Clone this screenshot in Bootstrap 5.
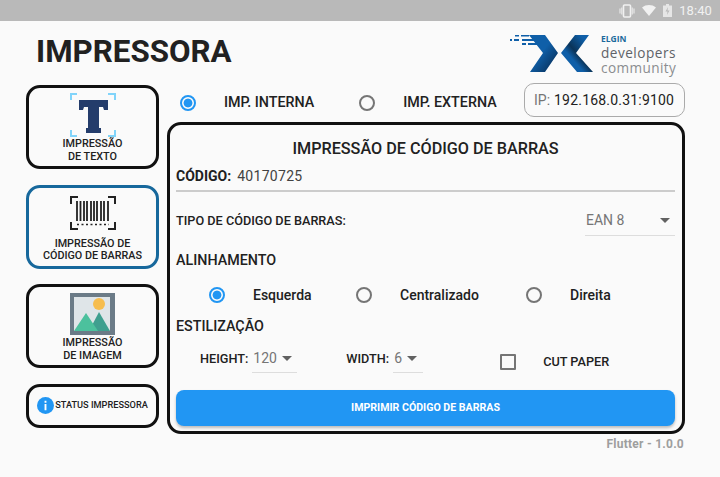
<!DOCTYPE html>
<html lang="pt-BR">

<head>
    <meta charset="UTF-8">
    <meta name="viewport" content="width=device-width, initial-scale=1.0">
    <title>Impressora</title>
    <link href="https://cdn.jsdelivr.net/npm/bootstrap@5.3.3/dist/css/bootstrap.min.css" rel="stylesheet">
    <style>
        html, body { height: 477px; overflow: hidden; }
        body { background: #fafafa; font-family: Roboto, sans-serif; color: #212121; }

        .status-bar { height: 21px; background: #b9b9b9; color: #f1f1f1; font-size: 13px; padding-right: 8px; gap: 7px; letter-spacing: .1px; }
        .top-head { height: 62px; padding: 0 33px 0 36px; }
        .page-title { font-size: 31.3px; font-weight: 700; line-height: 1; margin: 15px 0 0; }
        .logo-box { width: 177px; height: 46px; margin-top: 11px; }
        .logo-text { margin-left: 91px; padding-top: 2px; }
        .logo-elgin { color: #1b6a9c; font: 700 8.5px/10px "Open Sans", sans-serif; }
        .logo-dev { color: #5f6368; font: 500 13.6px/15px "Open Sans", sans-serif; letter-spacing: .5px; margin-top: 1px; }
        .logo-com { color: #8a8d90; font: 400 13.6px/15px "Open Sans", sans-serif; letter-spacing: .4px; }

        .page-body { padding-left: 26px; gap: 8px; }
        .side-col { width: 133px; padding-top: 2px; gap: 15.5px; }
        .side-btn { background: #fafafa; border: 3px solid #111; border-radius: 14px; height: 84px; font-size: 10.8px; font-weight: 500; line-height: 12.5px; color: #212121; text-transform: uppercase; }
        .side-btn.is-on { border-color: #17689c; }
        .side-btn svg { display: block; flex: none; }
        .side-status { height: 44px; font-size: 9.2px; gap: 1px; }

        .main-col { width: 518px; }
        .radio-row { height: 39px; padding-left: 13px; }
        .radio-md.form-check-input { width: 16px; height: 16px; margin: 0; flex: none; border: 2px solid #757575; background: transparent none; box-shadow: none; }
        .radio-md.form-check-input:checked[type=radio] { border-color: #2196f3; background: radial-gradient(circle, #2196f3 0 4px, transparent 4.8px); }
        .radio-lbl { font-size: 14.3px; font-weight: 500; color: #212121; margin-left: 28px; }
        .ip-box { width: 161px; height: 34px; border: 1px solid #aaa; border-radius: 10px; font-size: 14px; padding-left: 9px; color: #757575; }
        .ip-box b { font-weight: 400; color: #212121; letter-spacing: .2px; }

        .print-panel { height: 312px; border: 3px solid #111; border-radius: 14px; padding: 0 7px 0 6px; }
        .panel-title { font-size: 16.2px; font-weight: 500; height: 20px; margin: 14px 0 0; line-height: 20px; }
        .code-row { height: 27px; margin-top: 6px; border-bottom: 2px solid #ccc; font-size: 14px; padding-bottom: 2px; }
        .code-row label { font-weight: 700; margin-right: 6px; }
        .code-row .form-control { border: 0; padding: 0; background: none; box-shadow: none; font-size: 14px; letter-spacing: .3px; color: #424242; border-radius: 0; }
        .type-row { height: 30px; margin-top: 14px; }
        .type-lbl { font-size: 12.7px; font-weight: 500; }
        .pick { border-bottom: 1px solid #ddd; color: #757575; font-size: 14px; height: 100%; }
        .pick-ean { width: 90px; padding: 0 5px 0 1px; }
        .pick-h { width: 45px; padding: 0 5px 0 1px; height: 28px; }
        .pick-w { width: 30px; padding: 0 6px 0 1px; height: 28px; }
        .caret-dn { width: 0; height: 0; border: 5px solid transparent; border-top-color: #616161; border-bottom: 0; }
        .sec-title { font-size: 14.3px; font-weight: 500; line-height: 18px; }
        .align-row { height: 24px; margin-top: 14px; padding-left: 33px; font-weight: 500; }
        .opt-a { width: 147px; }
        .opt-b { width: 170px; }
        .opt-txt { font-size: 14px; margin-left: 28px; color: #212121; }
        .style-row { height: 28px; margin-top: 10px; padding-left: 24px; }
        .small-lbl { font-size: 12.7px; font-weight: 500; margin-right: 4px; }
        .cut-box.form-check-input { width: 16px; height: 16px; border: 2px solid #757575; margin: 5px 27px 0 77px; border-radius: 1px; background: transparent; box-shadow: none; }
        .cut-lbl { margin-top: 5px; }
        .print-btn { height: 36px; margin-top: 17px; background: #2196f3; border: 0; border-radius: 8px; color: #fff; font-size: 10.6px; font-weight: 700; box-shadow: 0 2px 3px rgba(0,0,0,.25); }
        .print-btn:hover { background: #2196f3; color: #fff; }
        .version { font-size: 12px; font-weight: 700; color: #9e9e9e; text-align: right; padding-right: 1px; margin-top: 1px; letter-spacing: .25px; }
    </style>
</head>

<body>
    <div class="status-bar d-flex align-items-center justify-content-end">
        <svg width="16" height="14" viewBox="0 0 16 14"><rect x="4.500" y="1" width="7" height="12" rx="1" fill="none" stroke="#f1f1f1" stroke-width="1.600"/><path d="M1 4.500v5M2.800 3.500v7M13.200 3.500v7M15 4.500v5" stroke="#f1f1f1"/></svg>
        <svg width="14" height="11" viewBox="0 0 14 11"><path d="M0 2.500C4-.8 10-.8 14 2.500L7 11z" fill="#f1f1f1"/></svg>
        <svg width="9" height="13" viewBox="0 0 9 13"><path d="M3 0h3v1.500h3V13H0V1.500h3z" fill="#e6e6e6"/><path d="M5 3L2.500 7.500h2L4 11l2.500-4.500h-2z" fill="#b9b9b9"/></svg>
        <span>18:40</span>
    </div>

    <div class="top-head d-flex justify-content-between align-items-start">
        <h1 class="page-title">IMPRESSORA</h1>
        <div class="logo-box d-flex position-relative">
            <svg class="position-absolute top-0 start-0" width="90" height="44" viewBox="0 0 90 44">
                <defs>
                    <linearGradient id="chevL" x1="0" y1="0" x2="1" y2="1"><stop offset=".45" stop-color="#0f5fa8"/><stop offset=".75" stop-color="#0a3f73"/><stop offset="1" stop-color="#0f5fa8"/></linearGradient>
                    <linearGradient id="chevR" x1="1" y1="0" x2="0" y2="1"><stop offset=".2" stop-color="#0f5fa8"/><stop offset=".5" stop-color="#0a3358"/><stop offset=".65" stop-color="#0f5fa8"/></linearGradient>
                </defs>
                <path d="M19 3H35L48 21 35 40H20L33 21Z" fill="url(#chevL)"/>
                <path d="M79 3H65L51 21 67 40H83L66 21Z" fill="url(#chevR)"/>
                <path d="M5 3h4v1.500H5zM11 3h8v1.500h-8zM0 7h2v2H0zM4 7h5v2H4zM12 7h14v2H12zM12 11h4v2h-4zM18 11h11v2H18z" fill="#0f5fa8"/>
            </svg>
            <div class="logo-text">
                <div class="logo-elgin">ELGIN</div>
                <div class="logo-dev">developers</div>
                <div class="logo-com">community</div>
            </div>
        </div>
    </div>

    <div class="page-body d-flex align-items-start">
        <div class="side-col d-flex flex-column">
            <button class="side-btn d-flex flex-column align-items-center p-0" type="button">
                <svg width="46" height="46" viewBox="0 0 46 46" class="mt-1">
                    <path d="M1 8V2h6M38 2h7v6M1 38v6h6M38 44h7v-6" fill="none" stroke="#81d4fa" stroke-width="2"/>
                    <path d="M9 8H38V18H34L33 15H29V36H31V41H16V36H18V15H14L13 18H9Z" fill="#243c6b"/>
                </svg>
                <span class="text-center">Impressão<br>de texto</span>
            </button>
            <button class="side-btn is-on d-flex flex-column align-items-center p-0" type="button">
                <svg width="46" height="34" viewBox="0 0 46 34" class="mt-2">
                    <path d="M1 8V1h7M38 1h7v7M1 26v7h7M38 33h7v-7" fill="none" stroke="#222" stroke-width="2"/>
                    <path d="M7 5v20M10.500 5v20M14 5v20M17 5v20M21 5v20M24 5v20M27 5v20M31 5v20M34 5v20M38 5v20" stroke="#222" stroke-width="1.800"/>
                    <path d="M7 28.500h32" stroke="#222" stroke-width="1.300" stroke-dasharray="2 2.500"/>
                </svg>
                <span class="text-center" style="margin-top:8px">Impressão de<br>código de barras</span>
            </button>
            <button class="side-btn d-flex flex-column align-items-center p-0" type="button">
                <svg width="45" height="42" viewBox="0 0 45 42" style="margin-top:6px">
                    <rect width="45" height="42" fill="#6b7b87"/>
                    <rect x="4" y="4" width="36" height="34" fill="#dfe5e8"/>
                    <circle cx="29" cy="11" r="6" fill="#f6bd4e"/>
                    <path d="M19 38 L29 19 L40 38Z" fill="#3f9f8f"/>
                    <path d="M4 38 L16 20 L28 38Z" fill="#4cc19d"/>
                </svg>
                <span class="text-center" style="margin-top:2px">Impressão<br>de imagem</span>
            </button>
            <button class="side-btn side-status d-flex align-items-center justify-content-center p-0" type="button">
                <svg width="17" height="17" viewBox="0 0 18 18"><circle cx="9" cy="9" r="9" fill="#2196f3"/><path d="M8 4h2v2H8zM8 7.500h2V14H8z" fill="#fff"/></svg>
                <span>Status impressora</span>
            </button>
        </div>

        <div class="main-col">
            <div class="radio-row d-flex align-items-center">
                <input class="form-check-input radio-md" type="radio" name="imp" id="impInt" checked>
                <label class="radio-lbl" for="impInt">IMP. INTERNA</label>
                <input class="form-check-input radio-md" type="radio" name="imp" id="impExt" style="margin-left:45px">
                <label class="radio-lbl" for="impExt">IMP. EXTERNA</label>
                <div class="ip-box d-flex align-items-center gap-1 ms-auto align-self-start">IP: <b>192.168.0.31:9100</b></div>
            </div>

            <div class="print-panel">
                <h2 class="panel-title text-center">IMPRESSÃO DE CÓDIGO DE BARRAS</h2>

                <div class="code-row d-flex align-items-center">
                    <label for="codigo">CÓDIGO:</label>
                    <input class="form-control" id="codigo" type="text" value="40170725">
                </div>

                <div class="type-row d-flex align-items-center justify-content-between">
                    <span class="type-lbl">TIPO DE CÓDIGO DE BARRAS:</span>
                    <div class="pick pick-ean d-flex align-items-center justify-content-between"><span>EAN 8</span><i class="caret-dn"></i></div>
                </div>

                <div class="sec-title" style="margin-top:15px">ALINHAMENTO</div>
                <div class="align-row d-flex align-items-center">
                    <div class="opt-a d-flex align-items-center"><input class="form-check-input radio-md" type="radio" name="alinha" checked><span class="opt-txt">Esquerda</span></div>
                    <div class="opt-b d-flex align-items-center"><input class="form-check-input radio-md" type="radio" name="alinha"><span class="opt-txt">Centralizado</span></div>
                    <div class="d-flex align-items-center"><input class="form-check-input radio-md" type="radio" name="alinha"><span class="opt-txt">Direita</span></div>
                </div>

                <div class="sec-title" style="margin-top:10px">ESTILIZAÇÃO</div>
                <div class="style-row d-flex align-items-center">
                    <span class="small-lbl">HEIGHT:</span>
                    <div class="pick pick-h d-flex align-items-center justify-content-between"><span>120</span><i class="caret-dn"></i></div>
                    <span class="small-lbl" style="margin-left:49px">WIDTH:</span>
                    <div class="pick pick-w d-flex align-items-center justify-content-between"><span>6</span><i class="caret-dn"></i></div>
                    <input class="form-check-input cut-box" type="checkbox">
                    <span class="small-lbl cut-lbl">CUT PAPER</span>
                </div>

                <button class="btn print-btn w-100 p-0" type="button">IMPRIMIR CÓDIGO DE BARRAS</button>
            </div>
            <div class="version">Flutter - 1.0.0</div>
        </div>
    </div>

    <script src="https://cdn.jsdelivr.net/npm/bootstrap@5.3.3/dist/js/bootstrap.bundle.min.js"></script>
</body>

</html>
